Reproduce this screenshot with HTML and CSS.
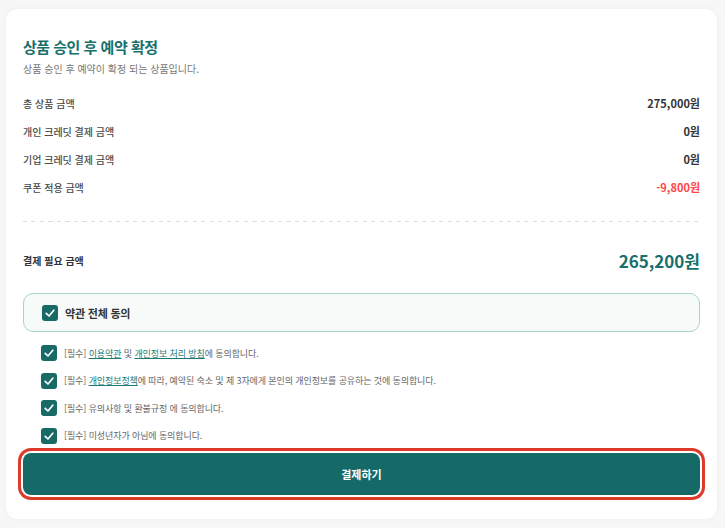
FILE: index.html
```html
<!DOCTYPE html>
<html lang="ko">
<head>
	<meta charset="UTF-8">
	<title>결제</title>
	<link rel="stylesheet" href="styles.css">
</head>
<body>
	<div class="wrap">
		<div class="card">
			<h2 class="title">상품 승인 후 예약 확정</h2>
			<p class="desc">상품 승인 후 예약이 확정 되는 상품입니다.</p>

			<div class="rows">
				<div class="row"><span class="label">총 상품 금액</span><span class="value">275,000원</span></div>
				<div class="row"><span class="label">개인 크레딧 결제 금액</span><span class="value">0원</span></div>
				<div class="row"><span class="label">기업 크레딧 결제 금액</span><span class="value">0원</span></div>
				<div class="row"><span class="label">쿠폰 적용 금액</span><span class="value minus">-9,800원</span></div>
			</div>

			<div class="dash"></div>

			<div class="total">
				<span class="total-label">결제 필요 금액</span>
				<span class="total-value">265,200원</span>
			</div>

			<label class="agree-all">
				<span class="check"><svg viewBox="0 0 16 16"><polyline points="4.2,8.3 7,11 11.8,5.2"/></svg></span>
				<span>약관 전체 동의</span>
			</label>

			<ul class="terms">
				<li><span class="check"><svg viewBox="0 0 16 16"><polyline points="4.2,8.3 7,11 11.8,5.2"/></svg></span>
					<span>[필수] <a href="#">이용약관</a> 및 <a href="#">개인정보 처리 방침</a>에 동의합니다.</span></li>
				<li><span class="check"><svg viewBox="0 0 16 16"><polyline points="4.2,8.3 7,11 11.8,5.2"/></svg></span>
					<span>[필수] <a href="#">개인정보정책</a>에 따라, 예약된 숙소 및 제 3자에게 본인의 개인정보를 공유하는 것에 동의합니다.</span></li>
				<li><span class="check"><svg viewBox="0 0 16 16"><polyline points="4.2,8.3 7,11 11.8,5.2"/></svg></span>
					<span>[필수] 유의사항 및 환불규정 에 동의합니다.</span></li>
				<li><span class="check"><svg viewBox="0 0 16 16"><polyline points="4.2,8.3 7,11 11.8,5.2"/></svg></span>
					<span>[필수] 미성년자가 아님에 동의합니다.</span></li>
			</ul>

			<button class="btn-pay">결제하기</button>
		</div>
	</div>
</body>
</html>
```

FILE: styles.css
```css
*{
	margin: 0;
	padding: 0;
	box-sizing: border-box;
}
body{
	background: #f7f7f7;
	font-family: "Noto Sans CJK KR", "Noto Sans", sans-serif;
	color: #333;
}
.wrap{
	padding: 9px 8px 11px 6px;
}
.card{
	background: #fff;
	border-radius: 12px;
	box-shadow: 0 0 6px rgba(0,0,0,.04);
	padding: 28px 17px 24px;
}
.title{
	font-size: 15px;
	line-height: 20px;
	font-weight: 700;
	letter-spacing: -0.5px;
	color: #17706b;
}
.desc{
	margin-top: 5px;
	font-size: 10px;
	line-height: 14px;
	color: #777;
}
.rows{
	margin-top: 20px;
	display: flex;
	flex-direction: column;
	gap: 14px;
}
.row{
	display: flex;
	justify-content: space-between;
	align-items: center;
	height: 14px;
}
.label{
	font-size: 10px;
	font-weight: 500;
	color: #4a4a4a;
}
.value{
	font-size: 11px;
	font-weight: 700;
	color: #333;
}
.value.minus{
	color: #ff4747;
}
.dash{
	margin-top: 27px;
	height: 1px;
	background: repeating-linear-gradient(90deg, #dcdcdc 0 4px, transparent 4px 8.5px);
}
.total{
	margin-top: 26px;
	display: flex;
	justify-content: space-between;
	align-items: center;
	height: 24px;
}
.total-label{
	font-size: 10px;
	font-weight: 700;
	color: #333;
}
.total-value{
	font-size: 17px;
	font-weight: 700;
	color: #17706b;
}
.agree-all{
	margin-top: 21px;
	display: flex;
	align-items: center;
	gap: 7px;
	height: 39px;
	padding-left: 18px;
	border: 1px solid #a9d3cf;
	border-radius: 10px;
	background: #f6fbfa;
	font-size: 11px;
	font-weight: 700;
	letter-spacing: -0.2px;
	color: #333;
}
.check{
	display: inline-flex;
	flex: none;
	width: 16px;
	height: 16px;
	border-radius: 3px;
	background: #176a66;
}
.check svg{
	width: 16px;
	height: 16px;
	fill: none;
	stroke: #fff;
	stroke-width: 1.7;
	stroke-linecap: round;
	stroke-linejoin: round;
}
.terms{
	list-style: none;
	margin-top: 13px;
	padding-left: 18px;
	display: flex;
	flex-direction: column;
	gap: 11.5px;
}
.terms li{
	display: flex;
	align-items: center;
	gap: 7px;
	height: 16px;
	font-size: 9px;
	letter-spacing: -0.1px;
	color: #666;
}
.terms a{
	color: #1b7a77;
	text-decoration: underline;
}
.btn-pay{
	display: block;
	width: 100%;
	height: 42px;
	margin-top: 9px;
	border: none;
	border-radius: 8px;
	background: #156a68;
	color: #fff;
	font-family: inherit;
	font-size: 11px;
	font-weight: 700;
	box-shadow: 0 0 0 2px #fff, 0 0 0 5px #dc3b2b;
}
```
